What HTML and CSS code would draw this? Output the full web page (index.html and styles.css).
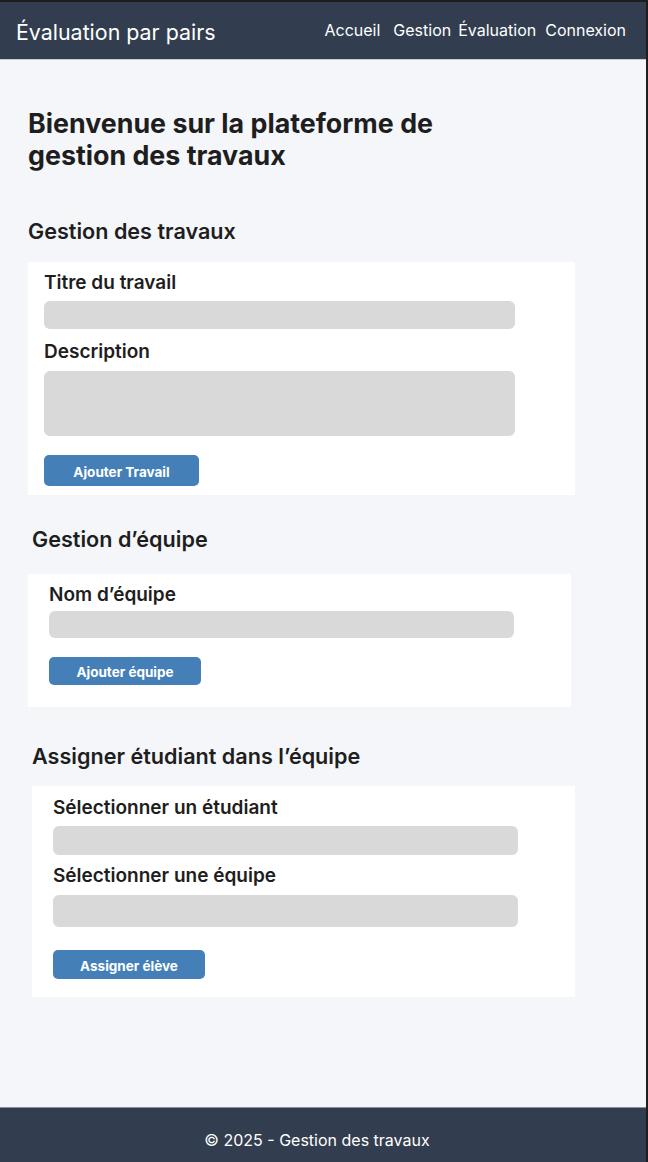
FILE: index.html
```html
<!DOCTYPE html>
<html lang="fr">
<head>
<meta charset="utf-8">
<title>Évaluation par pairs</title>
<link rel="stylesheet" href="styles.css">
</head>
<body>
<div class="frame">
  <header class="topbar">
    <div class="brand">Évaluation par pairs</div>
    <nav class="nav">
      <a>Accueil</a>
      <a>Gestion</a>
      <a>Évaluation</a>
      <a>Connexion</a>
    </nav>
  </header>
  <main class="content">
    <h1 class="title">Bienvenue sur la plateforme de<br>gestion des travaux</h1>

    <section class="section s1">
      <h2 class="section-title">Gestion des travaux</h2>
      <div class="card c1">
        <label class="label">Titre du travail</label>
        <div class="input"></div>
        <label class="label">Description</label>
        <div class="input textarea"></div>
        <button class="btn">Ajouter Travail</button>
      </div>
    </section>

    <section class="section s2">
      <h2 class="section-title">Gestion d’équipe</h2>
      <div class="card c2">
        <label class="label">Nom d’équipe</label>
        <div class="input"></div>
        <button class="btn">Ajouter équipe</button>
      </div>
    </section>

    <section class="section s3">
      <h2 class="section-title">Assigner étudiant dans l’équipe</h2>
      <div class="card c3">
        <label class="label">Sélectionner un étudiant</label>
        <div class="input"></div>
        <label class="label">Sélectionner une équipe</label>
        <div class="input tall"></div>
        <button class="btn">Assigner élève</button>
      </div>
    </section>
  </main>
  <footer class="footer">© 2025 - Gestion des travaux</footer>
</div>
</body>
</html>
```

FILE: styles.css
```css
* { box-sizing: border-box; }
html, body { margin: 0; padding: 0; }
body {
  font-family: Inter, "Noto Sans", sans-serif;
  background: #1e1e1e;
  color: #1e1e1e;
}
.frame {
  margin-top: 2px;
  margin-right: 2px;
  height: 1160px;
  display: flex;
  flex-direction: column;
  background: #f5f6fa;
}
.topbar {
  height: 58px;
  background: #323e4f;
  border-bottom: 1px solid #c9ced6;
  display: flex;
  align-items: center;
  justify-content: space-between;
  padding: 0 20px 0 16px;
  color: #ffffff;
}
.brand {
  font-size: 21.4px;
  font-weight: 400;
  padding-top: 3px;
}
.nav {
  display: flex;
  gap: 12px;
  font-size: 16px;
  margin-top: -2px;
}
.nav a { color: #ffffff; }
.nav a:nth-child(2) { margin-left: 1px; }
.nav a:nth-child(3) { margin-left: -5px; }
.nav a:nth-child(4) { margin-left: -3px; }
.nav a:first-child { margin-left: -2px; }
.content {
  flex: 1;
  padding: 47px 0 0 0;
}
.title {
  margin: 0 0 0 28px;
  font-size: 26.8px;
  line-height: 32px;
  font-weight: 700;
  color: #1e1e1e;
}
.section-title {
  margin: 0;
  font-size: 21.6px;
  line-height: 24px;
  font-weight: 600;
  color: #1e1e1e;
}
.s1 { margin: 48px 0 0 28px; }
.s1 .section-title { margin-bottom: 19px; }
.s2 { margin: 32px 0 0 32px; }
.s2 .section-title { margin-bottom: 23px; }
.s3 { margin: 37px 0 0 32px; }
.s3 .section-title { margin-bottom: 18px; }
.card {
  background: #ffffff;
  display: flex;
  flex-direction: column;
  align-items: flex-start;
}
.c1 { width: 547px; padding: 10px 0 9px 16px; }
.c2 { width: 543px; margin-left: -4px; padding: 10px 0 22px 21px; }
.c3 { width: 543px; padding: 11px 0 18px 21px; }
.label {
  font-size: 19px;
  line-height: 22px;
  font-weight: 600;
  color: #1e1e1e;
}
.input {
  width: 471px;
  height: 28px;
  background: #d9d9d9;
  border-radius: 6px;
  margin: 7px 0 12px;
}
.c1 .textarea { height: 65px; margin: 8px 0 0; }
.c2 .input { width: 465px; height: 27px; margin: 5px 0 0; }
.c3 .input { width: 465px; height: 29px; margin: 7px 0 10px; }
.c3 .input.tall { height: 32px; margin: 8px 0 0; }
.btn {
  margin-top: 19px;
  width: 155px;
  height: 31px;
  border: none;
  border-radius: 5px;
  background: #457fb7;
  color: #ffffff;
  font-family: Inter, "Noto Sans", sans-serif;
  font-size: 13.5px;
  font-weight: 700;
  padding: 2px 0 0;
}
.c2 .btn { width: 152px; height: 28px; }
.c3 .btn { width: 152px; height: 29px; margin-top: 23px; }
.footer {
  height: 55px;
  background: #323e4f;
  border-top: 1px solid #8b929c;
  color: #ffffff;
  font-size: 16px;
  display: flex;
  align-items: center;
  justify-content: center;
  padding: 9px 12px 0 0;
}
```
